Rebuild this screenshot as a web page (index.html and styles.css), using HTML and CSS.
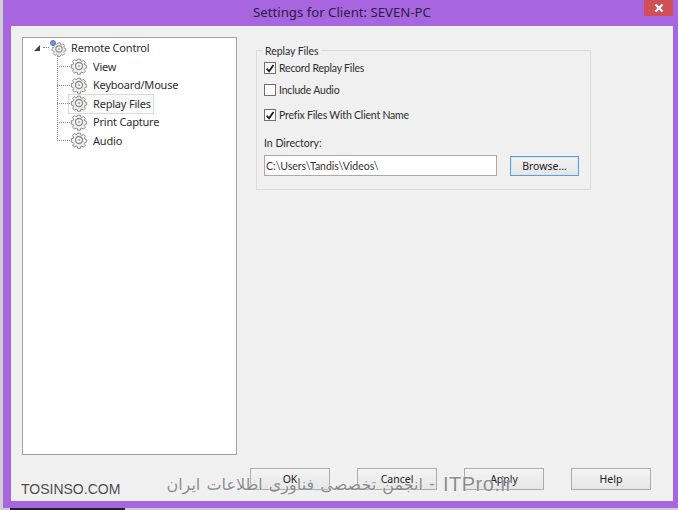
FILE: index.html
```html
<!DOCTYPE html>
<html lang="en">
<head>
<meta charset="utf-8">
<title>Settings for Client: SEVEN-PC</title>
<link rel="stylesheet" href="styles.css">
</head>
<body>
<svg class="defs" width="0" height="0" aria-hidden="true">
  <symbol id="gear" viewBox="0 0 20 20">
    <path d="M8.3 1.5h3.4l.4 2.2 1.5.6 1.9-1.3 2.400 2.400-1.300 1.900.6 1.500 2.200.4v3.400l-2.200.4-.6 1.500 1.300 1.900-2.400 2.400-1.900-1.300-1.500.6-.4 2.200H8.300l-.4-2.200-1.500-.6-1.900 1.300-2.400-2.400 1.300-1.900-.6-1.500-2.200-.4V8.300l2.200-.4.6-1.500-1.300-1.900 2.400-2.400 1.900 1.300 1.500-.6z" transform="translate(1 1) scale(.9)" fill="#f1f1f1" stroke="#8a8a8a" stroke-width="1.200"/>
    <circle cx="10" cy="10" r="3.900" fill="#fff" stroke="#8c8c8c" stroke-width="1.500"/>
    <circle cx="10" cy="10" r="1.500" fill="#b5b5b5"/>
  </symbol>
</svg>
<div class="window">
  <header class="titlebar">
    <h1 class="title">Settings for Client: SEVEN-PC</h1>
    <button class="close" aria-label="Close">
      <svg width="10" height="10" viewBox="0 0 10 10"><path d="M1.500 1.500l7 7M8.500 1.500l-7 7" stroke="#fff" stroke-width="2.200"/></svg>
    </button>
  </header>
  <main class="dialog">
    <div class="panes">
      <nav class="tree">
        <div class="root">
          <svg class="twisty" width="8" height="8" viewBox="0 0 8 8"><path d="M7 1v6H1z" fill="#444"/></svg>
          <span class="root-dash"></span>
          <span class="root-icon">
            <svg class="gear" width="16" height="16"><use href="#gear"/></svg>
            <i class="root-dot"></i>
          </span>
          <span class="tree-label">Remote Control</span>
        </div>
        <ul class="branch">
          <li class="node"><svg class="gear" width="18" height="18"><use href="#gear"/></svg><span class="tree-label">View</span></li>
          <li class="node"><svg class="gear" width="18" height="18"><use href="#gear"/></svg><span class="tree-label">Keyboard/Mouse</span></li>
          <li class="node selected"><svg class="gear" width="18" height="18"><use href="#gear"/></svg><span class="tree-label">Replay Files</span></li>
          <li class="node"><svg class="gear" width="18" height="18"><use href="#gear"/></svg><span class="tree-label">Print Capture</span></li>
          <li class="node"><svg class="gear" width="18" height="18"><use href="#gear"/></svg><span class="tree-label">Audio</span></li>
        </ul>
      </nav>
      <section class="settings">
        <fieldset class="group">
          <legend class="legend">Replay Files</legend>
          <div class="check first">
            <span class="box"><svg width="11" height="11" viewBox="0 0 11 11"><path d="M1.800 5.600l2.700 3 4.800-7" fill="none" stroke="#222" stroke-width="2"/></svg></span>
            <span>Record Replay Files</span>
          </div>
          <div class="check second">
            <span class="box"></span>
            <span>Include Audio</span>
          </div>
          <div class="check third">
            <span class="box"><svg width="11" height="11" viewBox="0 0 11 11"><path d="M1.800 5.600l2.700 3 4.800-7" fill="none" stroke="#222" stroke-width="2"/></svg></span>
            <span>Prefix Files With Client Name</span>
          </div>
          <div class="dir-label">In Directory:</div>
          <div class="dir-row">
            <input class="dir-input" type="text" value="C:\Users\Tandis\Videos\">
            <button class="btn browse">Browse...</button>
          </div>
        </fieldset>
      </section>
    </div>
    <footer class="actions">
      <button class="btn action">OK</button>
      <button class="btn action">Cancel</button>
      <button class="btn action">Apply</button>
      <button class="btn action">Help</button>
    </footer>
  </main>
</div>
<div class="strip"></div>
<div class="mark-left">TOSINSO.COM</div>
<div class="mark-main"><span class="mark-fa" dir="rtl" lang="fa">انجمن تخصصی فناوری اطلاعات ایران</span><span class="mark-sep">-</span><span class="mark-en">ITPro.ir</span></div>
</body>
</html>
```
FILE: styles.css
```css
* { box-sizing: border-box; }
html, body { margin: 0; height: 510px; overflow: hidden; }
body {
  position: relative;
  width: 678px;
  background: #cfcfcf;
  font-family: "Noto Sans", "Liberation Sans", sans-serif;
  font-size: 11px;
  color: #2e2e2e;
  padding-left: 3px;
}
.defs { position: absolute; }
.window {
  width: 675px;
  height: 508px;
  background: #a865e0;
  padding: 0 5px 7px 8px;
  display: flex;
  flex-direction: column;
}
.titlebar {
  height: 26px;
  flex: none;
  position: relative;
  display: flex;
  justify-content: center;
  align-items: center;
}
.title {
  margin: 0 0 2px;
  font-size: 13.200px;
  font-weight: 400;
  color: #2a2040;
}
.close {
  position: absolute;
  right: 0;
  top: 0;
  width: 29px;
  height: 16px;
  border: 0;
  padding: 0;
  background: #cf5157;
  display: flex;
  align-items: center;
  justify-content: center;
}
.dialog {
  flex: 1;
  background: #f0f0f0;
  padding: 11px 21px 11px 11px;
  display: flex;
  flex-direction: column;
}
.panes { display: flex; flex: 1; align-items: flex-start; }
.tree {
  width: 215px;
  height: 418px;
  flex: none;
  background: #fff;
  border: 1px solid #a4a4a4;
  padding-top: 1px;
}
.root { display: flex; align-items: center; height: 18px; position: relative; margin-top: -1px; }
.twisty { margin-left: 10px; margin-top: 1px; }
.root-dash { width: 6px; height: 1px; margin: 0 0 0 2px; border-top: 1px dotted #888; }
.root-icon { position: relative; width: 16px; height: 16px; margin-left: 2px; margin-top: 3px; }
.root-icon .gear { display: block; }
.root-dot {
  position: absolute;
  left: -1px;
  top: -1px;
  width: 6px;
  height: 6px;
  border-radius: 50%;
  background: #7c93d8;
  border: 1px solid #5a70b8;
}
.root .tree-label { margin-left: 4px; }
.branch {
  list-style: none;
  margin: 1px 0 0 34px;
  padding: 0;
  position: relative;
}
.branch::before {
  content: "";
  position: absolute;
  left: 0;
  top: -1px;
  height: 83px;
  border-left: 1px dotted #8a8a8a;
}
.node {
  height: 18.500px;
  display: flex;
  align-items: center;
  position: relative;
  padding-left: 13px;
}
.node::before {
  content: "";
  position: absolute;
  left: 0;
  top: 9px;
  width: 13px;
  border-top: 1px dotted #8a8a8a;
}
.node .tree-label { margin-left: 4px; padding: 0 1px; }
.node.selected::after {
  content: "";
  position: absolute;
  left: 11px;
  top: 0;
  width: 84px;
  height: 18px;
  border: 1px solid #d9d9d9;
  background: rgba(120, 120, 120, .04);
}
.tree-label { white-space: nowrap; letter-spacing: -.2px; }
.settings { margin-left: 19px; padding-top: 13px; }
.group {
  position: relative;
  width: 335px;
  height: 140px;
  margin: 0;
  padding: 0 0 0 7px;
  border: 1px solid #dcdcdc;
}
.legend {
  position: absolute;
  top: -7px;
  left: 6px;
  padding: 0 2px;
  background: #f0f0f0;
  font-family: "Lato", "Noto Sans", sans-serif;
  font-size: 10.500px;
  letter-spacing: -.05px;
  line-height: 14px;
}
.check { display: flex; align-items: center; gap: 3px; font-family: "Lato", "Noto Sans", sans-serif; font-size: 10.500px; letter-spacing: -.2px; height: 14px; }
.check.first { margin-top: 10px; }
.check.second { margin-top: 8px; }
.check.third { margin-top: 11px; }
.box {
  width: 12px;
  height: 12px;
  background: #fff;
  border: 1px solid #707070;
  display: flex;
  align-items: center;
  justify-content: center;
}
.dir-label { margin-top: 14px; font-family: "Lato", "Noto Sans", sans-serif; font-size: 10.500px; line-height: 14px; }
.dir-row { display: flex; align-items: center; margin-top: 5px; }
.dir-input {
  width: 233px;
  height: 21px;
  border: 1px solid #a9a9a9;
  background: #fff;
  padding: 0 1px;
  font: 10.500px "Lato", "Noto Sans", sans-serif;
  color: #333;
}
.btn {
  background: linear-gradient(#f4f4f4, #e6e6e6);
  border: 1px solid #acacac;
  font: 10.500px "Noto Sans", "Liberation Sans", sans-serif;
  color: #222;
  padding: 0;
}
.browse {
  width: 69px;
  height: 20px;
  margin-left: 13px;
  border-color: #5f9fd8;
  box-shadow: inset 0 0 0 1px #d5e6f5;
}
.actions {
  display: flex;
  gap: 27px;
  padding-left: 228px;
  flex: none;
}
.action { width: 80px; height: 22px; flex: none; }
.strip {
  position: absolute;
  left: 10px;
  top: 508px;
  width: 115px;
  height: 2px;
  background: #222;
}
.mark-left {
  position: absolute;
  left: 21px;
  top: 481px;
  font: 14px/16px "Liberation Sans", sans-serif;
  color: #4a4a4a;
  text-shadow: 0 0 1px #fff;
}
.mark-main {
  position: absolute;
  left: 165px;
  top: 472px;
  display: flex;
  align-items: center;
  height: 24px;
  color: #8c8c8c;
  white-space: nowrap;
  text-shadow: 0 0 2px #fff;
}
.mark-fa {
  font: 16px/24px "Noto Sans", "DejaVu Sans", sans-serif;
  word-spacing: 2px;
  width: 258px;
}
.mark-sep { font: 18px/24px "Liberation Sans", sans-serif; margin-left: 6px; width: 14px; }
.mark-en { font: 20px/24px "Liberation Sans", sans-serif; letter-spacing: .5px; }
```
